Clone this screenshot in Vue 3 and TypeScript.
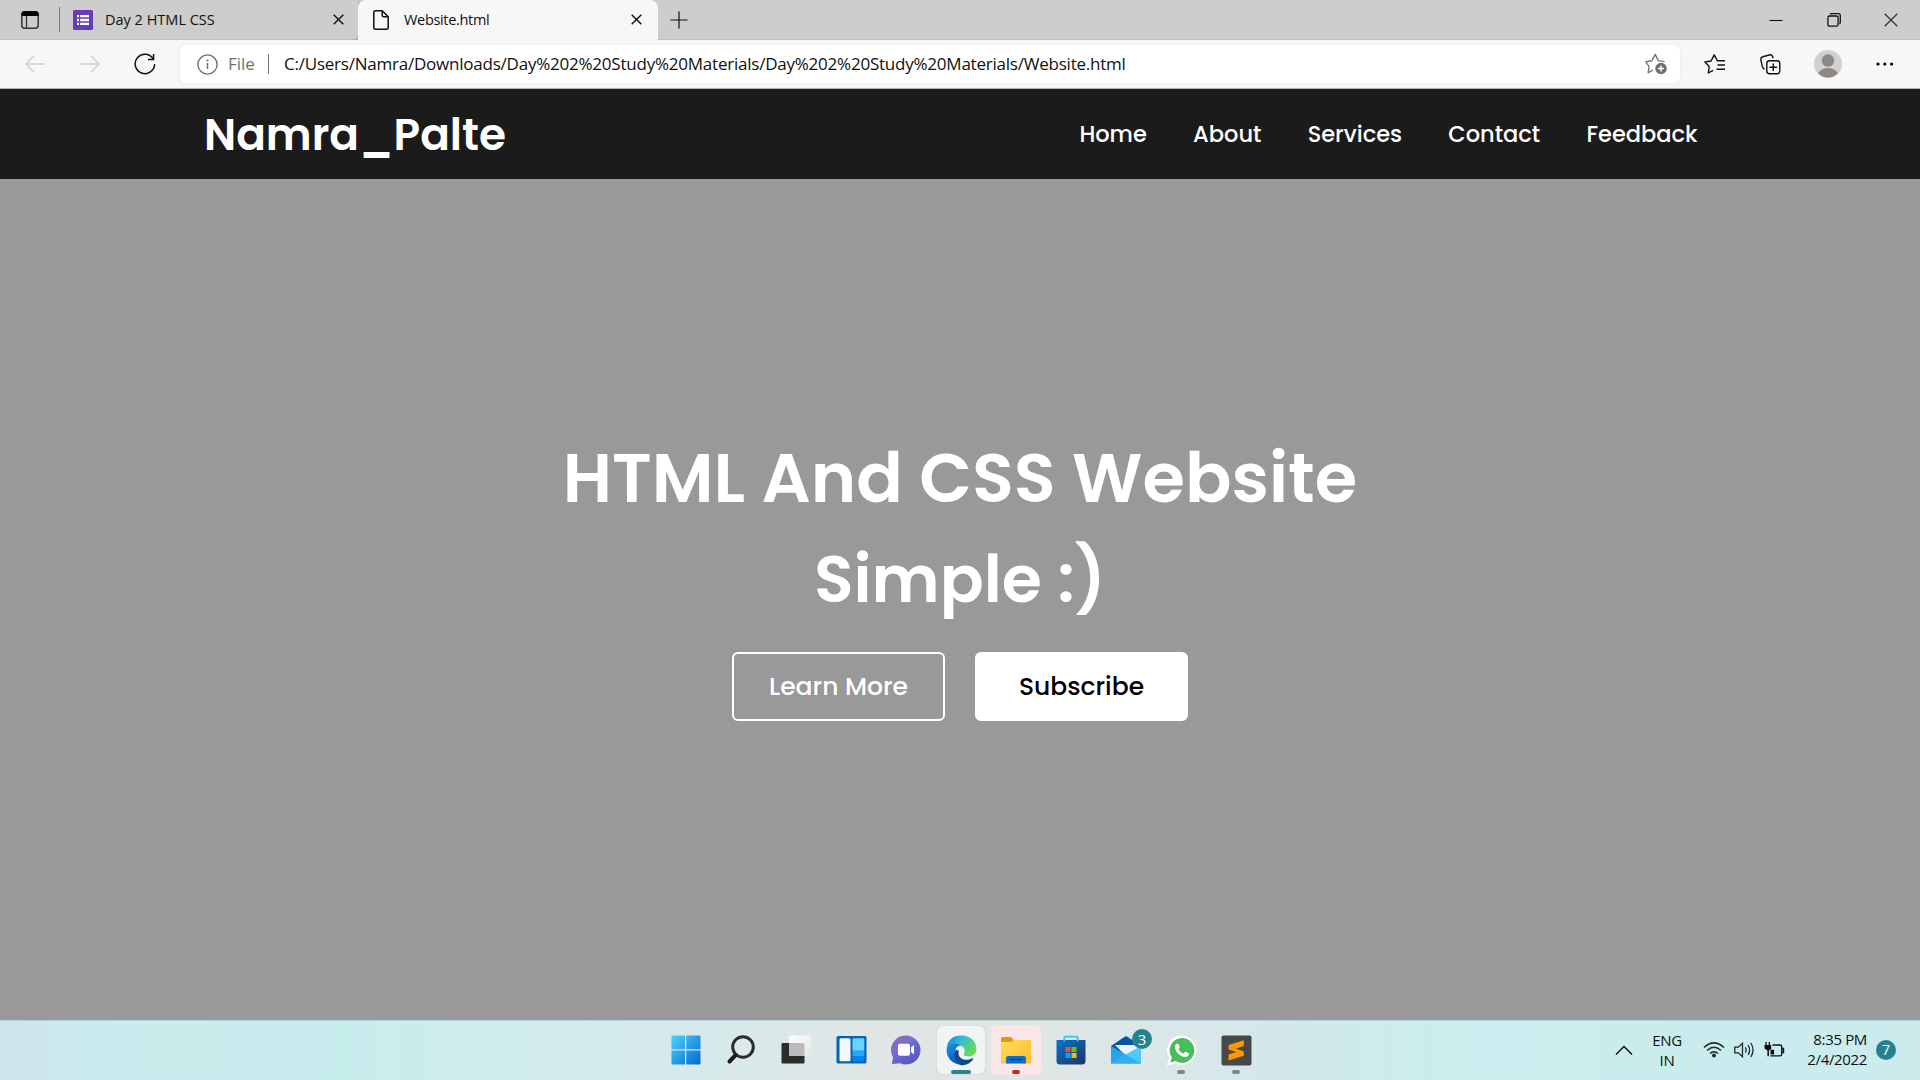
<script setup lang="ts">
const url = 'C:/Users/Namra/Downloads/Day%202%20Study%20Materials/Day%202%20Study%20Materials/Website.html'
const links: string[] = ['Home', 'About', 'Services', 'Contact', 'Feedback']
</script>

<template>
  <div class="screen">
    <div class="tabs">
      <svg class="workspace" width="18" height="18" viewBox="0 0 18 18"><rect x=".8" y=".8" width="16.4" height="16.4" rx="3" fill="none" stroke="#333" stroke-width="1.5" /><path d="M.5 5V3Q.5.3 3 .3h12q2.5 0 2.5 2.7v2z" fill="#000" /><path d="M5.5 5v12" stroke="#333" stroke-width="1.3" /></svg>
      <i class="split"></i>
      <div class="tab first">
        <svg width="20" height="20" viewBox="0 0 20 20"><rect width="20" height="20" rx="1.5" fill="#673ab7" /><path d="M4 6.2h2M4 10h2M4 13.8h2M7.2 6.2H16M7.2 10H16M7.2 13.8H16" stroke="#fff" stroke-width="2.3" /></svg>
        <span class="day">Day 2 HTML CSS</span>
        <svg class="x" width="11" height="11" viewBox="0 0 11 11"><path d="M.7.7l9.6 9.6M10.3.7L.7 10.3" /></svg>
      </div>
      <div class="tab active">
        <svg width="16" height="20" viewBox="0 0 16 20"><path d="M2.8.8h6.4l6 6v10.4q0 2-2 2H2.8q-2 0-2-2V2.8q0-2 2-2zM9.2.8v4.5q0 1.5 1.5 1.5h4.5" fill="none" stroke="#111" stroke-width="1.5" stroke-linejoin="round" /></svg>
        <span class="site">Website.html</span>
        <svg class="x" width="11" height="11" viewBox="0 0 11 11"><path d="M.7.7l9.6 9.6M10.3.7L.7 10.3" /></svg>
      </div>
      <svg class="plus" width="18" height="18" viewBox="0 0 18 18"><path d="M9 .5v17M.5 9h17" stroke="#111" stroke-width="1.2" /></svg>
      <div class="controls">
        <svg width="14" height="14" viewBox="0 0 14 14"><path d="M.5 7.5h13" stroke="#111" stroke-width="1.1" /></svg>
        <svg width="14" height="14" viewBox="0 0 14 14"><rect x=".9" y="3" width="10.2" height="10.2" rx="1.8" /><path d="M3 1.4Q3.6.7 4.6.7h6.6q2.1 0 2.1 2.1v6.5q0 1.2-.8 1.8" /></svg>
        <svg width="14" height="14" viewBox="0 0 14 14"><path d="M.7.7l12.6 12.6M13.3.7L.7 13.3" stroke="#333" /></svg>
      </div>
    </div>

    <div class="toolbar">
      <svg class="back" width="20" height="18" viewBox="0 0 20 18"><path d="M9 .8L.9 9 9 17.2M1 9h19" /></svg>
      <svg class="forward" width="20" height="18" viewBox="0 0 20 18"><path d="M11 .8L19.1 9 11 17.2M19 9H0" /></svg>
      <svg class="reload" width="22" height="22" viewBox="0 0 22 22"><path d="M19.4 6.2A9.7 9.7 0 1 0 20.6 11M19.6 1v5.6H14" fill="none" stroke="#111" stroke-width="1.5" /></svg>
      <div class="address">
        <svg width="21" height="21" viewBox="0 0 21 21"><circle cx="10.5" cy="10.5" r="9.6" fill="none" stroke="#707070" stroke-width="1.4" /><circle cx="10.5" cy="6.5" r="1.1" fill="#707070" /><path d="M10.5 9v6" stroke="#707070" stroke-width="1.5" /></svg>
        <span class="file">File</span>
        <i></i>
        <span class="url">{{ url }}</span>
        <svg class="star" width="23" height="22" viewBox="0 0 23 22"><path d="M8 17.2l-4.8 2.5.8-6.4L.8 8.8l6-1L10.2 1.4l3.1 6.2 6.3 1" fill="none" stroke="#777" stroke-width="1.4" stroke-linejoin="round" /><circle cx="16" cy="15.5" r="5.7" fill="#6f6f6f" /><path d="M16 12.5v6M13 15.5h6" stroke="#fff" stroke-width="1.4" /></svg>
      </div>
      <svg class="favs" width="22" height="20" viewBox="0 0 22 20"><path d="M13.5 7L10.2.9 7.1 7l-6.2 1 4.3 4.5-.9 6.5 4.9-2.7M12.5 6.8H21M13.5 11H21M12.5 15.2H21" fill="none" stroke="#111" stroke-width="1.4" stroke-linejoin="round" /></svg>
      <svg class="collections" width="21" height="21" viewBox="0 0 21 21"><g fill="none" stroke="#111" stroke-width="1.4"><rect x="6.8" y="6.8" width="13" height="13" rx="2.7" /><path d="M13.3 9.5v7.6M9.5 13.3h7.6M4.5 15.2Q3 14.8 2.3 12.4L.9 6Q.4 3.3 2.8 2.7L9.3 1q2.5-.7 3.3 1.5l.5 1.8" /></g></svg>
      <svg class="avatar" width="28" height="28" viewBox="0 0 28 28"><defs><clipPath id="face"><circle cx="14" cy="14" r="13.5" /></clipPath></defs><circle cx="14" cy="14" r="14" fill="#d2d0ce" /><g fill="#8c8885" clip-path="url(#face)"><circle cx="14" cy="10.5" r="6.2" /><ellipse cx="14" cy="25.5" rx="10.3" ry="7.5" /></g></svg>
      <svg class="more" width="18" height="4" viewBox="0 0 18 4"><circle cx="2" cy="2" r="1.6" /><circle cx="8.8" cy="2" r="1.6" /><circle cx="15.6" cy="2" r="1.6" /></svg>
    </div>

    <header class="header">
      <span class="brand">Namra_Palte</span>
      <nav><a v-for="l in links" :key="l">{{ l }}</a></nav>
    </header>

    <main class="hero">
      <h1>HTML And CSS Website<br /><span>Simple :)</span></h1>
      <div class="actions">
        <button class="ghost">Learn More</button>
        <button class="solid">Subscribe</button>
      </div>
    </main>

    <footer class="taskbar">
      <div class="apps">
        <div class="app"><svg width="30" height="30" viewBox="0 0 30 30"><defs><linearGradient id="win" gradientUnits="userSpaceOnUse" x1="0" y1="0" x2="30" y2="30"><stop stop-color="#51d4fd" /><stop offset="1" stop-color="#0068ce" /></linearGradient></defs><path d="M1.5.5H14v13.7H.5V1.5q0-1 1-1zM15.2.5h13.3q1 0 1 1v12.7H15.2zM.5 15.4H14v14H1.5q-1 0-1-1zM15.2 15.4h14.3v13q0 1-1 1H15.2z" fill="url(#win)" /></svg></div>
        <div class="app"><svg width="30" height="30" viewBox="0 0 30 30"><circle cx="17" cy="12" r="10.3" fill="#dde9ea" stroke="#2c2c2c" stroke-width="3" /><path d="M9.7 20L3.500 26.5" stroke="#1c1c1c" stroke-width="4" stroke-linecap="round" /></svg></div>
        <div class="app"><svg width="31" height="30" viewBox="0 0 31 30"><defs><linearGradient id="tv" x2="1" y2="1"><stop stop-color="#fff" /><stop offset="1" stop-color="#e5e5e5" /></linearGradient></defs><rect x=".5" y="8" width="23" height="20.5" rx="1" fill="#2c2c2b" /><rect x="8" y=".5" width="22.5" height="20.5" rx="1" fill="url(#tv)" /><path d="M8 8h14.5q1 0 1 1v12H9q-1 0-1-1z" fill="#bbb" /></svg></div>
        <div class="app"><svg width="31" height="30" viewBox="0 0 31 30"><rect x=".5" y="1" width="30" height="27.5" rx="1.5" fill="#0763b4" /><rect x="3.5" y="3.2" width="11" height="23" rx="1.5" fill="#f5f7fa" /><path d="M17.5 3.2H27q1.3 0 1.3 1.3v11.3H16.5V4.5q0-1.3 1-1.3z" fill="#65d5fc" /><path d="M16.5 15.8h11.8v5.3H16.5z" fill="#23a8fb" /><path d="M16.5 21.1h11.8v3.8q0 1.3-1.3 1.3h-9.2q-1.3 0-1.3-1.3z" fill="#0682ea" /></svg></div>
        <div class="app"><svg width="30" height="30" viewBox="0 0 30 30"><defs><linearGradient id="chat" x1=".2" x2=".8" y2="1"><stop stop-color="#9567ad" /><stop offset=".35" stop-color="#7471cf" /><stop offset="1" stop-color="#4f54c2" /></linearGradient></defs><path d="M15 .5a14.5 14.5 0 1 1-6 27.7L1 29l1-6.8A14.5 14.5 0 0 1 15 .5z" fill="url(#chat)" /><rect x="7" y="8.8" width="12" height="12" rx="2" fill="#fff" /><path d="M20 12.5l3-2.5v9.500l-3-2.500z" fill="#fff" /></svg></div>
        <div class="app edge"><svg width="31" height="31" viewBox="0 0 31 31"><defs><linearGradient id="e1" x2="1" y2=".5"><stop stop-color="#0c79ce" /><stop offset=".45" stop-color="#35b8df" /><stop offset="1" stop-color="#66dc55" /></linearGradient><linearGradient id="e2" x2=".7" y2="1"><stop stop-color="#1891e4" /><stop offset="1" stop-color="#0b529d" /></linearGradient></defs><path d="M.6 13Q2.5.5 15.5.5C25 .5 30.7 7.5 30.5 14.3c-.1 5-4.2 7.3-8.3 7.2-3 0-5-1.3-4.4-2.4 2-2.7 1.1-6.9-3.3-8.7C9.3 8.2 3.7 9.7.6 13z" fill="url(#e1)" /><path d="M.5 15.5C.8 8.2 10 6.6 15 10.5c-3.5 0-6.500 3.500-5.700 8.200 1 6.200 7.700 9.300 13.500 6.700l3.800-1.900q.9 0 .4.8A14.900 14.900 0 0 1 .5 15.5z" fill="url(#e2)" /><path d="M10 14.5c-3.500 7-.2 12.500 5 15.700 5.200.5 9.200-2 11.900-5.700.5-.8.1-1.400-.8-1-6.700 3.400-15.300.3-13.300-7.700z" fill="#10478f" /></svg><b class="wide"></b></div>
        <div class="app explorer"><svg width="30" height="30" viewBox="0 0 30 30"><defs><linearGradient id="fold" x2="1" y2="1"><stop stop-color="#ffdc63" /><stop offset="1" stop-color="#fdbd27" /></linearGradient></defs><path d="M0 3.500Q0 2 1.500 2H10l3 3h15q2 0 2 2v5H0z" fill="#df9c08" /><path d="M0 7h10l3-2h16q1 0 1 1v22.500H0z" fill="url(#fold)" /><path d="M5 28.500v-5Q5 21 7.500 21h15q2.500 0 2.500 2.500v5z" fill="#0b6fc7" /><path d="M8.500 24.500h13" stroke="#08477e" stroke-width="1.3" /></svg><b class="red"></b></div>
        <div class="app"><svg width="30" height="30" viewBox="0 0 30 30"><defs><linearGradient id="store" x2="1" y2="1"><stop stop-color="#0675c9" /><stop offset="1" stop-color="#203464" /></linearGradient></defs><path d="M.5 5h29v21q0 3.500-3.500 3.500H4Q.5 29.500.5 26z" fill="url(#store)" /><path d="M8.300 6.500V3q0-1.400 1.400-1.400h10.600q1.400 0 1.400 1.400v3.500" fill="none" stroke="#2dc5f4" stroke-width="1.8" /><path d="M9.500 12h5v5h-5z" fill="#f25022" /><path d="M15.500 12h5v5h-5z" fill="#7fba00" /><path d="M9.500 18h5v5h-5z" fill="#00a4ef" /><path d="M15.500 18h5v5h-5z" fill="#ffb900" /></svg></div>
        <div class="app mail"><svg width="30" height="30" viewBox="0 0 30 30"><path d="M0 11L14 1.500q1-.6 2 0L30 11v8H0z" fill="#0756a5" /><path d="M4 10h23v8l-9 6z" fill="#f1f2f5" /><path d="M0 11l30 17.500H0z" fill="#28a4e9" /><path d="M30 11v17.500H28L14.500 19.500z" fill="#50c9fa" /><path d="M0 28.500L14.500 19.500 30 28.500z" fill="#31b0ef" /></svg><em>3</em></div>
        <div class="app"><svg width="31" height="31" viewBox="0 0 31 31"><path d="M16 .5a14.700 14.700 0 1 1-6.800 27.900L.7 30.600l2.400-8A14.700 14.700 0 0 1 16 .5z" fill="#fff" /><path d="M16 3a12.400 12.400 0 1 1-6.300 23.100l-5.300 1.300 1.500-5A12.400 12.400 0 0 1 16 3z" fill="#48bd5b" /><path d="M11.600 8.700c-1.700 0-3.300 1.900-2.600 4.200 1.300 4.800 5.100 8.200 9.800 9.200 2.200.4 4.500-1.500 4.100-3.300-.2-.8-2.800-2.100-3.500-2-.7.100-1.300 1.900-2 1.800-2-.6-4-2.500-4.800-4.400-.1-.6 1.200-1.300 1.100-2-.1-.7-1.100-3.500-2.100-3.500z" fill="#fff" /></svg><b></b></div>
        <div class="app"><svg width="31" height="31" viewBox="0 0 31 31"><rect x=".5" y=".5" width="30" height="30" rx="2" fill="#474747" /><path d="M22.800 5.200v5.900l-8 2.600 7.200 2.200q.8.300.8 1v3.800L7.500 25.400v-5.900l8-2.600-7.200-2.200q-.8-.3-.8-1V10z" fill="#ff9800" /></svg><b></b></div>
      </div>
      <div class="tray">
        <svg class="up" width="18" height="11" viewBox="0 0 18 11"><path d="M1 9.500l8-8 8 8" fill="none" stroke="#111" stroke-width="1.500" /></svg>
        <div class="lang">ENG<br />IN</div>
        <svg class="wifi" width="22" height="18" viewBox="0 0 22 18"><g fill="none" stroke="#1d292b" stroke-width="1.500"><path d="M1 6.500Q11-2.700 21 6.500M4 9.500q7-6.400 14 0M7 12.500q4-3.600 8 0" /></g><circle cx="11" cy="14.500" r="1.900" fill="#1d292b" /></svg>
        <svg class="sound" width="21" height="18" viewBox="0 0 21 18"><g fill="none" stroke="#1d292b" stroke-width="1.300"><path d="M.8 6.200h3.500L8.500 2.300v13.400l-4.200-3.900H.8zM11.300 6.300q1.700 2.700 0 5.400M14 4.200q3.300 4.800 0 9.600M16.800 2q4.500 7 0 14" /></g></svg>
        <svg class="battery" width="21" height="18" viewBox="0 0 21 18"><path d="M8.500 4H16q1.700 0 1.700 1.700v7.500q0 1.700-1.700 1.700H6.500M18.500 7.500h1v4h-1" fill="none" stroke="#111" stroke-width="1.400" /><path d="M1.400 1h1.300v3h2V1H6v3h1.200v4L5 9.500v5.800H3.400V9.500L.5 7.500V4h.9zM6.500 8.700h3.600v4.800H6.500z" fill="#111" /></svg>
        <div class="clock">8:35 PM<br />2/4/2022</div>
        <span class="count">7</span>
      </div>
    </footer>
  </div>
</template>

<style>
body { margin: 0; overflow: hidden; }
</style>

<style scoped>
* { box-sizing: border-box; }
svg { display: block; flex: none; }
.screen { width: 1920px; height: 1080px; display: flex; flex-direction: column; overflow: hidden; font-family: "Open Sans", "Noto Sans", sans-serif; }
.tabs { height: 40px; background: #cdcdcd; display: flex; align-items: center; flex: none; border-bottom: 1px solid #bebebe; }
.workspace { margin-left: 21px; }
.split { width: 1px; height: 25px; background: #777; margin-left: 20px; }
.tab { height: 40px; display: flex; align-items: center; font-size: 14.5px; white-space: nowrap; color: #111; flex: none; }
.tab.first { width: 298px; padding-left: 13px; border-radius: 0 0 6px 0; box-shadow: 1px 1px 2px #aaa; }
.tab .x { margin-left: auto; fill: none; stroke: #111; stroke-width: 1.4; }
.first .x { margin-right: 14px; }
.day { margin-left: 12px; }
.tab.active { width: 300px; padding-left: 15px; background: #f7f7f7; border-radius: 8px 8px 0 0; padding-bottom: 1px; margin-bottom: -1px; }
.site { margin-left: 15px; letter-spacing: -.32px; }
.active .x { margin-right: 16px; }
.plus { margin-left: 12px; }
.controls { margin-left: auto; margin-right: 22px; display: flex; gap: 43.5px; fill: none; stroke: #111; stroke-width: 1.3; }
.toolbar { height: 49px; background: #f7f7f7; display: flex; align-items: center; flex: none; border-bottom: 1px solid #b6b6b6; }
.back { margin-left: 25px; }
.back, .forward { fill: none; stroke: #cecece; stroke-width: 1.4; }
.forward { margin-left: 35px; }
.reload { margin-left: 34px; }
.address { width: 1500px; height: 38px; margin-left: 24px; border-radius: 6px; background: #fff; display: flex; align-items: center; padding-left: 17px; white-space: nowrap; box-shadow: 0 0 5px #e8e8e8; font-size: 17px; }
.file { margin-left: 10px; color: #707070; width: 29px; padding-bottom: 2px; }
.address i { width: 1px; height: 20px; background: #777; margin-left: 11px; margin-right: 15px; }
.url { letter-spacing: -.225px; color: #111; padding-bottom: 2px; }
.star { margin-left: auto; margin-right: 12px; }
.favs { margin-left: 24px; }
.collections { margin-left: 34px; }
.avatar { margin-left: 33px; }
.more { margin-left: 34px; }
.header { height: 90px; background: #1b1b1b; color: #fff; flex: none; display: flex; align-items: center; justify-content: space-between; padding: 0 222.5px 0 204px; font-family: Poppins, Inter, sans-serif; }
.brand { font-size: 43.75px; line-height: 66px; font-weight: 600; white-space: nowrap; padding-top: 2px; }
nav { display: flex; gap: 46.25px; }
nav a { font-size: 22.5px; line-height: 34px; font-weight: 500; white-space: nowrap; }
.hero { height: 841px; background: #999; flex: none; display: flex; flex-direction: column; align-items: center; color: #fff; font-family: Poppins, Inter, sans-serif; }
h1 { margin: 249px 0 0; height: 200px; text-align: center; font-size: 68.75px; line-height: 100px; font-weight: 600; white-space: nowrap; }
h1 span { font-size: 65px; }
.actions { display: flex; gap: 30px; margin-top: 24px; }
button { width: 213px; height: 69px; border: 2px solid #fff; border-radius: 6px; font: 500 25px/65px Poppins, Inter, sans-serif; padding: 0; }
.ghost { background: transparent; color: #fff; }
.solid { background: #fff; color: #000; }
.taskbar { height: 60px; flex: none; display: flex; align-items: center; justify-content: space-between; box-shadow: inset 0 1px #b9d4d8; background: linear-gradient(90deg, #cfe4ea 0, #caecee 90px, #c8eded 350px, #d0ebed 520px, #d6eaeb 680px, #e0e6e6 880px, #e0e6e6 1060px, #d3e8eb 1280px, #caedee 1450px, #cbebed 1920px); }
.apps { display: flex; align-items: center; gap: 5px; margin-left: 661px; }
.app { width: 50px; height: 50px; display: flex; align-items: center; justify-content: center; position: relative; }
.edge { background: #f1f4f4; border-radius: 5px; box-shadow: 0 0 1px #999; width: 48px; height: 48px; margin: 0 1px; }
.explorer { background: #fbe6e7; border-radius: 5px; }
.app b { position: absolute; bottom: 1px; left: calc(50% - 4px); width: 8px; height: 4px; border-radius: 2px; background: #818585; }
.app b.wide { width: 20px; left: calc(50% - 10px); bottom: 0; background: #288391; }
.app b.red { background: #c42b1c; }
em { position: absolute; left: 31px; top: 4px; width: 20px; height: 20px; border-radius: 50%; background: #26808f; color: #fff; font: 15px/20px "Open Sans", sans-serif; text-align: center; }
.tray { display: flex; align-items: center; margin-right: 24px; font-size: 15px; line-height: 20px; color: #111; }
.lang { margin-left: 19px; width: 30px; text-align: center; letter-spacing: -.3px; padding-bottom: 1px; }
.wifi { margin-left: 21px; }
.sound { margin-left: 9px; }
.battery { margin-left: 9px; }
.clock { margin-left: 18px; width: 64px; text-align: right; letter-spacing: -.35px; white-space: nowrap; padding-bottom: 3px; }
.count { margin-left: 9px; width: 20px; height: 20px; border-radius: 50%; background: #26808f; color: #fff; text-align: center; font-size: 14px; }
</style>
